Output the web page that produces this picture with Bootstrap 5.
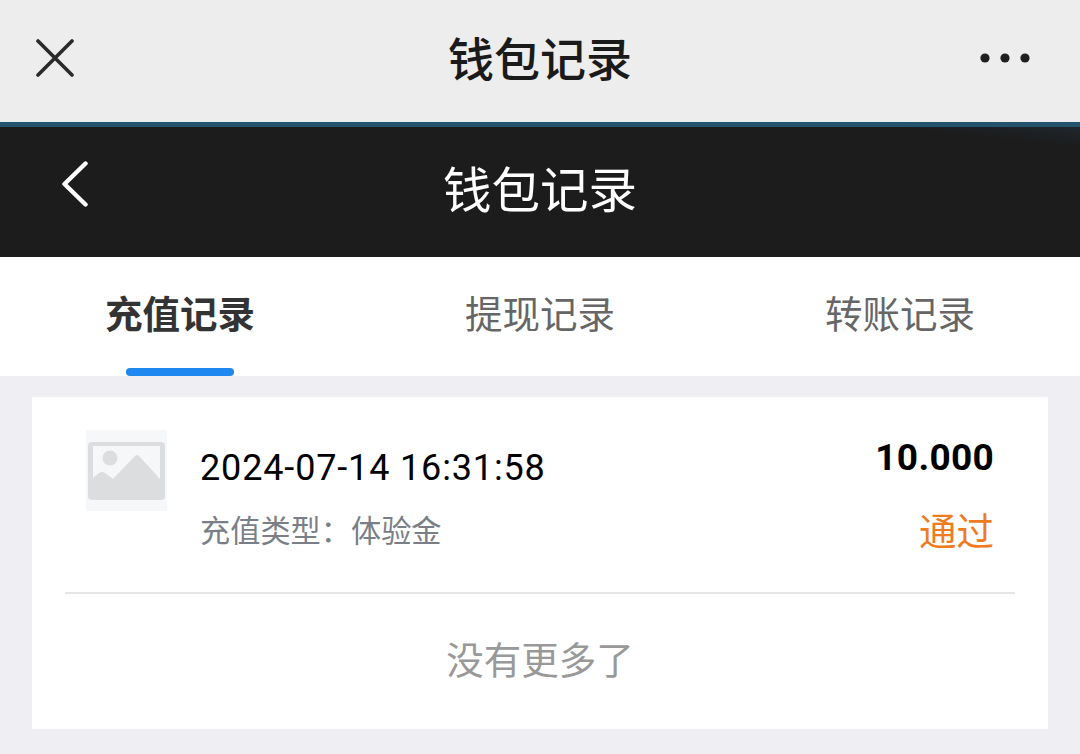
<!DOCTYPE html>
<html lang="zh-CN">
<head>
    <meta charset="UTF-8">
    <meta name="viewport" content="width=device-width, initial-scale=1.0">
    <title>钱包记录</title>
    <link href="https://cdn.jsdelivr.net/npm/bootstrap@5.3.0/dist/css/bootstrap.min.css" rel="stylesheet">
    <style>
        html, body { height: 100%; }
        body {
            font-family: Roboto, "Noto Sans CJK SC", sans-serif;
            background: #eeeef3;
            overflow: hidden;
        }

        /* top webview bar */
        .wx-bar { height: 122px; background: #ededed; padding: 0 50px 6px 36px; }
        .wx-title { font-size: 46px; font-weight: 500; color: #1a1a1a; line-height: 1; margin-top: 3px; }
        .wx-left { width: 64px; }
        .wx-right { width: 50px; }
        .blue-line { height: 5px; background: #24536e; }

        /* dark header */
        .dark-head {
            height: 130px;
            background: linear-gradient(186deg, #1f272d 0, #1c1c1d 8%);
            padding: 0 60px 0 62px;
        }
        .dark-title { font-size: 48.5px; color: #fff; line-height: 1; }
        .dark-left { width: 28px; margin-bottom: 16px; }
        .dark-right { width: 30px; }

        /* tabs */
        .tab-row { height: 119px; background: #fff; }
        .tab-item {
            font-size: 37.5px;
            line-height: 1;
            color: #666;
            padding-top: 40px;
        }
        .tab-item.on { color: #333; font-weight: 700; }
        .tab-item.on::after {
            content: "";
            position: absolute;
            left: 50%;
            bottom: 0;
            width: 108px;
            height: 8px;
            margin-left: -54px;
            background: #1e88f0;
            border-radius: 4px;
        }

        /* record card */
        .rec-card { margin: 21px 32px 0; height: 332px; background: #fff; padding: 0 33px; }
        .rec-row { height: 197px; padding: 33px 21px 0 21px; border-bottom: 2px solid #e6e6e6; }
        .rec-thumb { width: 81px; height: 81px; background: #f6f7f8; margin-right: 33px; }
        .rec-date { font-size: 36px; line-height: 1; color: #000; margin-top: 20px; letter-spacing: .85px; }
        .rec-type { font-size: 30.2px; line-height: 1; color: #7a7f87; margin-top: 31px; }
        .rec-amount { font-size: 37px; font-weight: 700; line-height: 1; color: #000; margin-top: 9px; letter-spacing: .3px; }
        .rec-state { font-size: 37.5px; line-height: 1; color: #ee7b22; margin-top: 38px; }
        .no-more { font-size: 37.5px; color: #999; line-height: 1; padding-top: 49px; }
    </style>
</head>
<body>

    <div class="wx-bar d-flex align-items-center justify-content-between">
        <div class="wx-left">
            <svg class="d-block" width="38" height="38" viewBox="0 0 38 38" fill="none" stroke="#2a2a2a" stroke-width="3.6" stroke-linecap="round">
                <path d="M2 2 L36 36 M36 2 L2 36"/>
            </svg>
        </div>
        <div class="wx-title">钱包记录</div>
        <div class="wx-right d-flex justify-content-end">
            <svg class="d-block" width="50" height="14" viewBox="0 0 50 14" fill="#1f1f1f">
                <circle cx="5" cy="7" r="4.6"/>
                <circle cx="25" cy="7" r="4.6"/>
                <circle cx="45" cy="7" r="4.6"/>
            </svg>
        </div>
    </div>
    <div class="blue-line"></div>

    <div class="dark-head d-flex align-items-center justify-content-between">
        <div class="dark-left">
            <svg class="d-block" width="28" height="46" viewBox="0 0 28 46" fill="none" stroke="#fff" stroke-width="4.4" stroke-linecap="round" stroke-linejoin="round">
                <path d="M23.5 2.5 L2.5 23 L23.5 43.5"/>
            </svg>
        </div>
        <div class="dark-title">钱包记录</div>
        <div class="dark-right"></div>
    </div>

    <div class="tab-row row g-0 text-center">
        <div class="col-4 tab-item on position-relative">充值记录</div>
        <div class="col-4 tab-item">提现记录</div>
        <div class="col-4 tab-item">转账记录</div>
    </div>

    <div class="rec-card">
        <div class="rec-row d-flex">
            <div class="rec-thumb d-flex align-items-center justify-content-center">
                <svg class="d-block" width="77" height="58" viewBox="0 0 77 58">
                    <rect width="77" height="58" rx="4" fill="#dcdddf"/>
                    <path d="M5 4 H72 V37 L52 15 Q49 11 46 15 L25 37 L17 31 Q14 29 11 31 L5 36 Z" fill="#f6f7f8"/>
                    <circle cx="22" cy="16" r="7.5" fill="#dcdddf"/>
                </svg>
            </div>
            <div class="flex-grow-1">
                <div class="rec-date">2024-07-14 16:31:58</div>
                <div class="rec-type">充值类型：体验金</div>
            </div>
            <div class="text-end">
                <div class="rec-amount">10.000</div>
                <div class="rec-state">通过</div>
            </div>
        </div>
        <div class="no-more text-center">没有更多了</div>
    </div>

    <script src="https://cdn.jsdelivr.net/npm/bootstrap@5.3.0/dist/js/bootstrap.bundle.min.js"></script>
</body>
</html>
